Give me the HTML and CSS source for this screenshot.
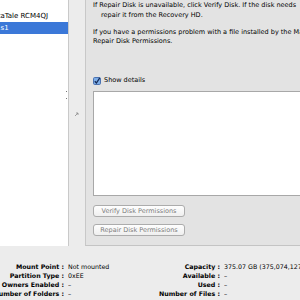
FILE: index.html
```html
<!DOCTYPE html>
<html lang="en">
<head>
  <meta charset="UTF-8" />
  <title>Disk Utility</title>
  <link rel="stylesheet" href="styles.css">
</head>
<body>

<div class="main">
  <div class="sidebar">
    <div class="disk">DataTale RCM4QJ</div>
    <div class="disk selected">disk1s1</div>
  </div>

  <div class="splitter">
    <span class="grip"></span>
    <svg class="collapse" width="6" height="5" viewBox="0 0 6 5">
      <path d="M1 4 L4 1 M2 1 L4 1 L4 3" stroke="#8a8a8a" stroke-width="0.8" fill="none"/>
    </svg>
  </div>

  <div class="panel">
    <p class="note">If Repair Disk is unavailable, click Verify Disk. If the disk needs<br><span class="indent">repair it from the Recovery HD.</span></p>
    <p class="note gap">If you have a permissions problem with a file installed by the Mac OS X installer, click<br>Repair Disk Permissions.</p>

    <label class="check-row">
      <svg width="8" height="8" viewBox="0 0 8 8">
        <rect x="0.5" y="0.5" width="7" height="7" rx="1.2" fill="#7eaee8" stroke="#4b72b0"/>
        <path d="M1.8 4.2 L3.4 6 L6.8 0.8" stroke="#152a55" stroke-width="1.3" fill="none"/>
      </svg>
      Show details
    </label>

    <div class="details"></div>

    <button class="perm-btn first">Verify Disk Permissions</button>
    <button class="perm-btn">Repair Disk Permissions</button>
  </div>
</div>

<div class="info">
  <span class="label">Mount Point :</span><span class="value">Not mounted</span>
  <span class="label">Capacity :</span><span class="value">375.07 GB (375,074,127,872 Bytes)</span>

  <span class="label">Partition Type :</span><span class="value">0xEE</span>
  <span class="label">Available :</span><span class="value">–</span>

  <span class="label">Owners Enabled :</span><span class="value">–</span>
  <span class="label">Used :</span><span class="value">–</span>

  <span class="label">Number of Folders :</span><span class="value">–</span>
  <span class="label">Number of Files :</span><span class="value">–</span>
</div>

</body>
</html>
```

FILE: styles.css
```css
body {
  margin: 0;
  width: 300px;
  height: 300px;
  overflow: hidden;
  background: #ececec;
  font-family: "DejaVu Sans", sans-serif;
  color: #000;
}
.main {
  display: flex;
  height: 246px;
}
.sidebar {
  width: 69px;
  flex: none;
  box-sizing: border-box;
  background: #fff;
  border-right: 1px solid #c9c9c9;
  padding-top: 10px;
  overflow: hidden;
}
.disk {
  height: 12px;
  line-height: 12px;
  font-size: 7px;
  white-space: nowrap;
  text-indent: -12px;
}
.disk.selected {
  background: #3b78d8;
  color: #fff;
  text-indent: -18px;
}
.splitter {
  width: 16px;
  flex: none;
  position: relative;
}
.grip {
  position: absolute;
  left: -3px;
  top: 91px;
  width: 1px;
  height: 6px;
  border-top: 1px solid #777;
  border-bottom: 1px solid #777;
}
.collapse {
  position: absolute;
  left: 5px;
  top: 112px;
}
.panel {
  flex: 1;
  min-width: 0;
  background: #e3e3e3;
  border-left: 1px solid #c8c8c8;
  border-bottom: 1px solid #c4c4c4;
  padding: 1px 0 0 7px;
  font-size: 6.5px;
  line-height: 9.6px;
}
.note {
  margin: 0;
  white-space: nowrap;
}
.note.gap {
  margin-top: 7.5px;
}
.indent {
  padding-left: 8px;
}
.check-row {
  display: flex;
  align-items: center;
  gap: 3px;
  height: 10px;
  margin-top: 29px;
}
.details {
  width: 240px;
  height: 103px;
  margin-top: 5px;
  background: #fff;
  border: 1px solid #a8a8a8;
}
.perm-btn {
  display: block;
  width: 92px;
  height: 12px;
  margin-top: 7px;
  padding: 0;
  border: 1px solid #acacac;
  border-radius: 3px;
  background: linear-gradient(#fefefe, #efefef);
  font-family: "DejaVu Sans", sans-serif;
  font-size: 6.5px;
  color: #7c7c7c;
}
.perm-btn.first {
  margin-top: 9px;
}
.info {
  display: grid;
  grid-template-columns: 64px 84px 64px 1fr;
  column-gap: 4px;
  padding-top: 16px;
  font-size: 6.3px;
  line-height: 9px;
}
.label {
  display: flex;
  justify-content: flex-end;
  white-space: nowrap;
  font-weight: bold;
}
.value {
  white-space: nowrap;
  overflow: hidden;
}
```
